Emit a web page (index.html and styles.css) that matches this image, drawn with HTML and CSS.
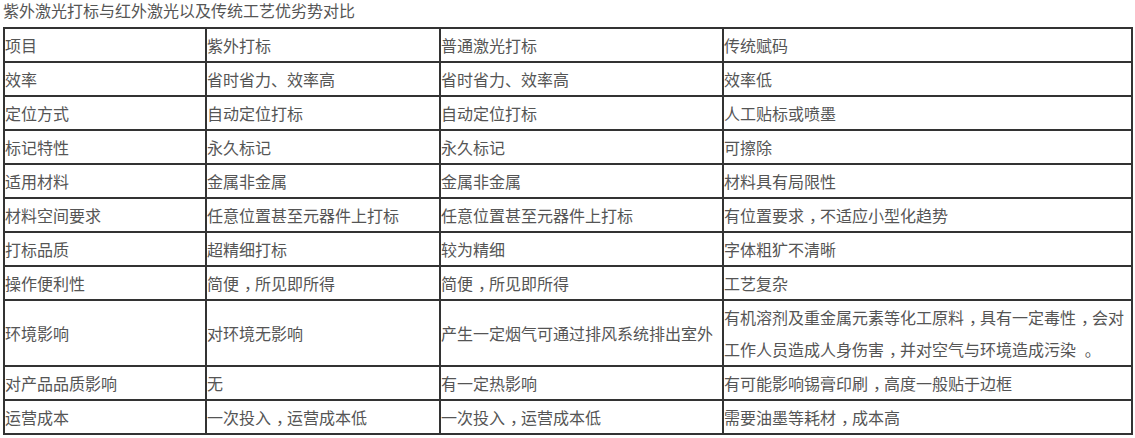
FILE: index.html
```html
<!DOCTYPE html>
<html lang="zh">
<head>
<meta charset="utf-8">
<title>紫外激光打标与红外激光以及传统工艺优劣势对比</title>
<link rel="stylesheet" href="styles.css">
</head>
<body>
<div class="page">
  <p class="title">紫外激光打标与红外激光以及传统工艺优劣势对比</p>
  <table class="compare">
    <colgroup>
      <col class="c1"><col class="c2"><col class="c3"><col class="c4">
    </colgroup>
    <tbody>
      <tr><td>项目</td><td>紫外打标</td><td>普通激光打标</td><td>传统赋码</td></tr>
      <tr><td>效率</td><td>省时省力、效率高</td><td>省时省力、效率高</td><td>效率低</td></tr>
      <tr><td>定位方式</td><td>自动定位打标</td><td>自动定位打标</td><td>人工贴标或喷墨</td></tr>
      <tr><td>标记特性</td><td>永久标记</td><td>永久标记</td><td>可擦除</td></tr>
      <tr><td>适用材料</td><td>金属非金属</td><td>金属非金属</td><td>材料具有局限性</td></tr>
      <tr><td>材料空间要求</td><td>任意位置甚至元器件上打标</td><td>任意位置甚至元器件上打标</td><td>有位置要求<span class="punc">，</span>不适应小型化趋势</td></tr>
      <tr><td>打标品质</td><td>超精细打标</td><td>较为精细</td><td>字体粗犷不清晰</td></tr>
      <tr><td>操作便利性</td><td>简便<span class="punc">，</span>所见即所得</td><td>简便<span class="punc">，</span>所见即所得</td><td>工艺复杂</td></tr>
      <tr><td>环境影响</td><td>对环境无影响</td><td>产生一定烟气可通过排风系统排出室外</td><td>有机溶剂及重金属元素等化工原料<span class="punc">，</span>具有一定毒性<span class="punc">，</span>会对<br>工作人员造成人身伤害<span class="punc">，</span>并对空气与环境造成污染 <span class="punc">。</span></td></tr>
      <tr><td>对产品品质影响</td><td>无</td><td>有一定热影响</td><td>有可能影响锡膏印刷<span class="punc">，</span>高度一般贴于边框</td></tr>
      <tr><td>运营成本</td><td>一次投入<span class="punc">，</span>运营成本低</td><td>一次投入<span class="punc">，</span>运营成本低</td><td>需要油墨等耗材<span class="punc">，</span>成本高</td></tr>
    </tbody>
  </table>
</div>
</body>
</html>
```
FILE: styles.css
```css
html, body {
  margin: 0;
  padding: 0;
  background: #ffffff;
}

.page {
  padding-left: 3px;
  font-family: "Noto Sans CJK SC", "Noto Sans", sans-serif;
  font-size: 16px;
  color: #555555;
}

.title {
  margin: 0;
  height: 27px;
  line-height: 21px;
  white-space: nowrap;
}

.compare {
  border-collapse: separate;
  border-spacing: 0;
  table-layout: fixed;
  width: 1130px;
  border-top: 2px solid #333333;
  border-left: 2px solid #333333;
}

.c1 { width: 202px; }
.c2 { width: 234px; }
.c3 { width: 283px; }
.c4 { width: 409px; }

.compare td {
  padding: 0;
  border-right: 2px solid #333333;
  border-bottom: 2px solid #333333;
  line-height: 32px;
  vertical-align: middle;
  text-align: left;
  white-space: nowrap;
  overflow: hidden;
}

/* full-width punctuation sits centred in its em box in the reference:
   use the half-width form and pad it back to a full em */
.punc {
  font-feature-settings: "halt" 1;
  padding: 0 3px 0 5px;
}
```
